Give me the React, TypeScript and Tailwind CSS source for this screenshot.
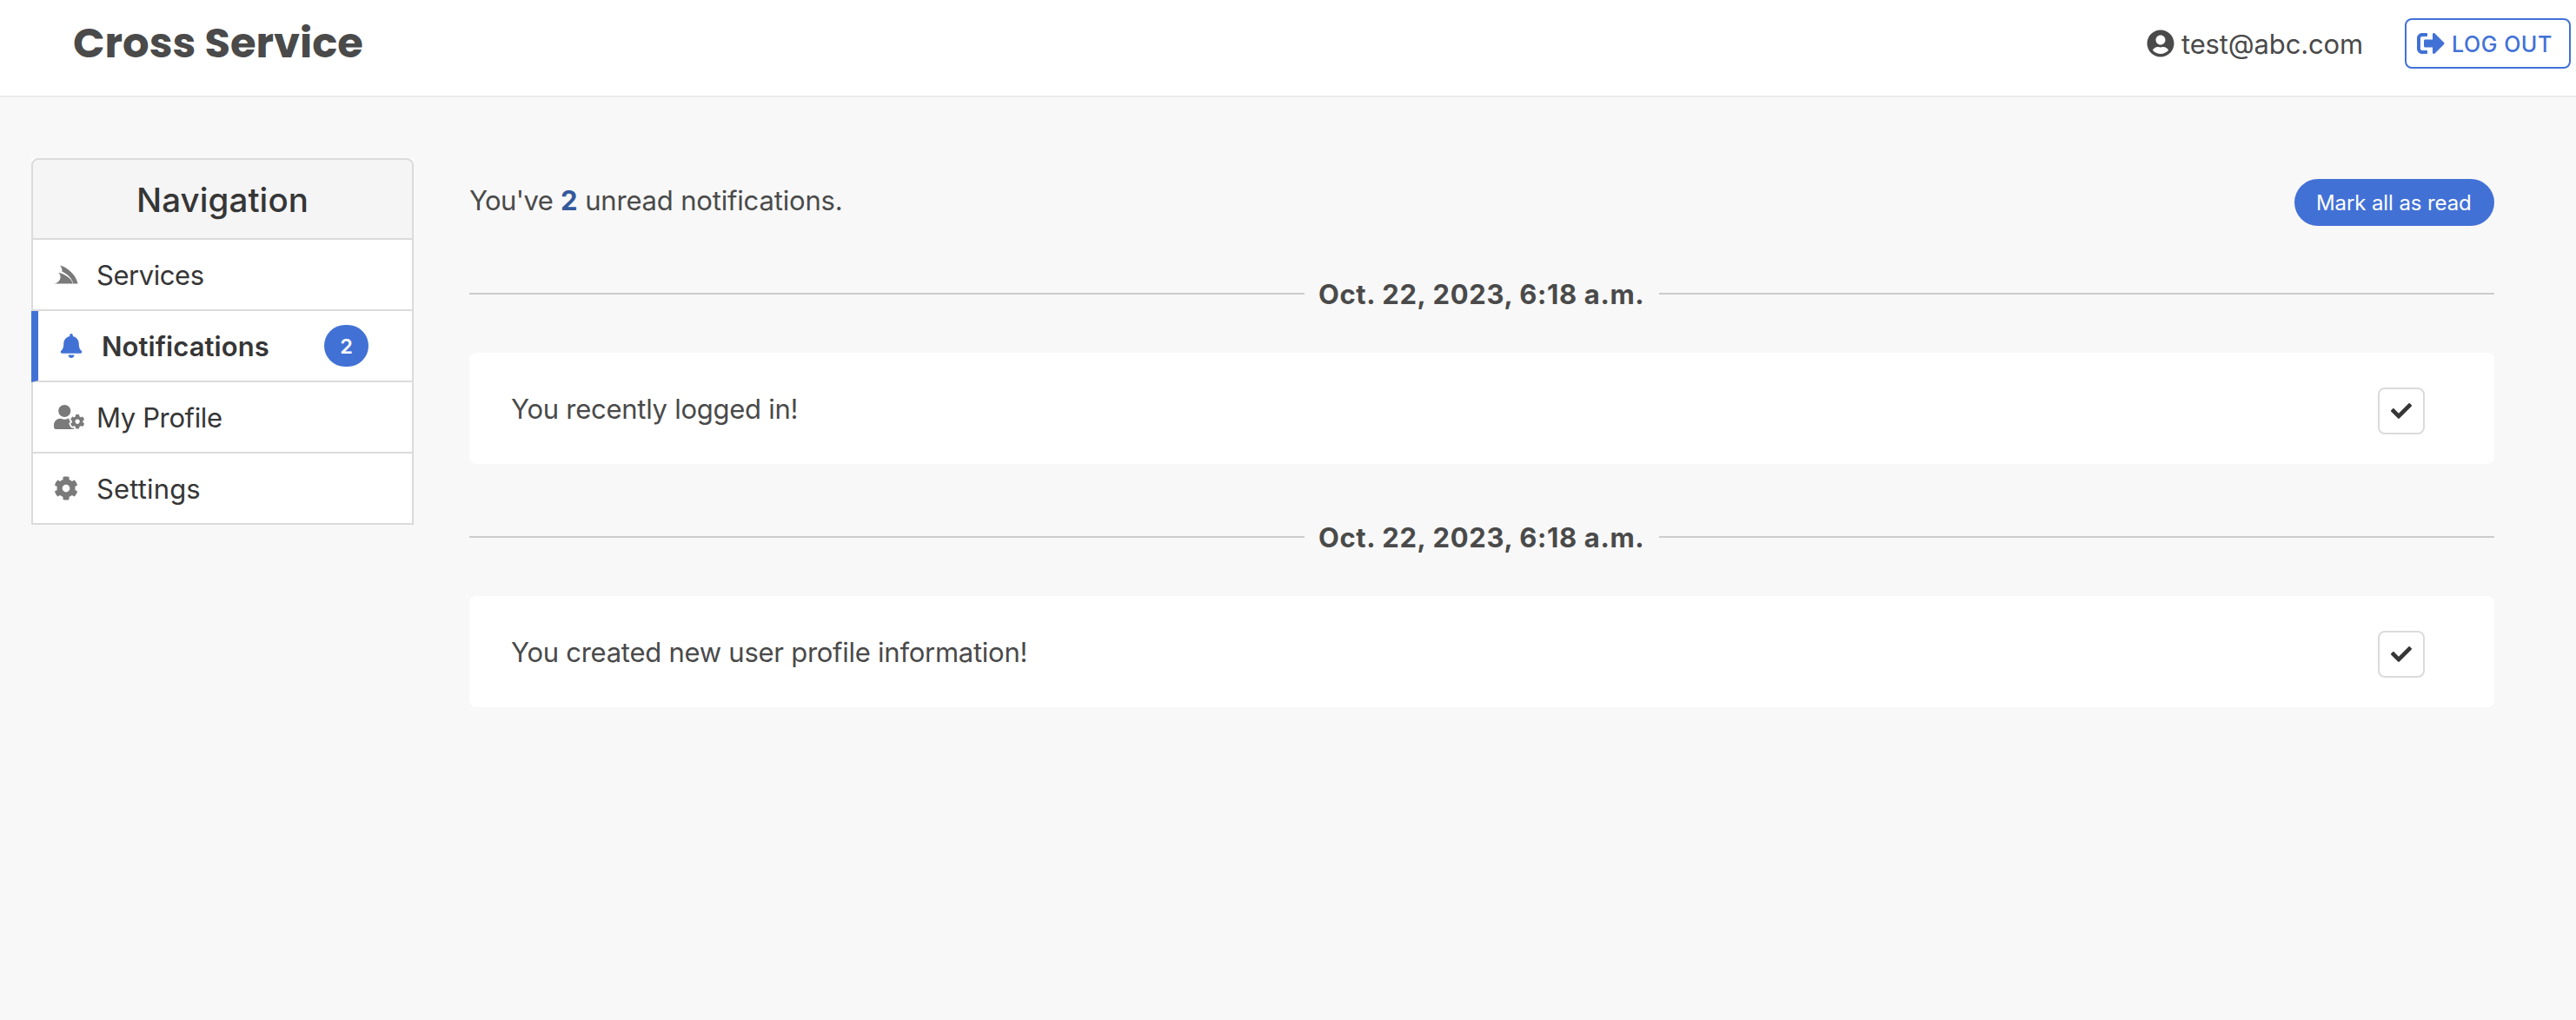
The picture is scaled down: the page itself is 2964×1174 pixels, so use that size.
import React from 'react';
import {
  FaBell,
  FaCheck,
  FaCog,
  FaServicestack,
  FaSignOutAlt,
  FaUserCircle,
  FaUserCog,
} from 'react-icons/fa';

function Header() {
  return (
    <header className="flex h-28 items-start justify-between border-b-2 border-[#ececec] bg-white pr-1.5 pl-[84px]">
      <h1 className="mt-4 font-[family-name:Poppins,Inter,sans-serif] text-5xl leading-[67px] font-bold text-[#4a4a4a]">
        Cross Service
      </h1>
      <div className="flex items-start">
        <div className="mt-8 mr-[50px] flex gap-2 text-[#4a4a4a]">
          <FaUserCircle className="mt-0.5 size-8" />
          <span className="w-[207px] text-[31px] leading-[37px] tracking-[-0.15px] whitespace-nowrap">
            test@abc.com
          </span>
        </div>
        <button className="mt-[21px] flex h-[58px] w-[191px] items-start gap-2 rounded-lg border-2 border-[#4271d6] pl-3 text-[#4271d6]">
          <FaSignOutAlt className="mt-[11px] size-8 shrink-0" />
          <span className="mt-[13px] text-[25px] leading-[30px] font-medium tracking-[0.55px] whitespace-nowrap">
            LOG OUT
          </span>
        </button>
      </div>
    </header>
  );
}

type NavItemProps = {
  icon: React.ReactNode;
  label: string;
  tracking: string;
  active?: boolean;
  badge?: number;
};

function NavItem({ icon, label, tracking, active, badge }: NavItemProps) {
  return (
    <a
      className={
        'flex h-[82px] items-start border-r-2 border-b-2 border-[#dbdbdb] bg-white pl-6 ' +
        (active ? 'border-l-8 border-l-[#4271d6]' : 'border-l-2')
      }
    >
      <span
        className={
          'mt-[26px] mr-[21px] flex w-7 ' + (active ? 'justify-center text-[#4271d6]' : 'text-[#7a7a7a]')
        }
      >
        {icon}
      </span>
      <span
        className={
          'mt-[22px] text-[31px] leading-[37px] whitespace-nowrap text-[#363636] ' +
          tracking +
          (active ? ' font-semibold' : '')
        }
      >
        {label}
      </span>
      {badge !== undefined && (
        <span className="mt-4 mr-[50px] ml-auto flex h-12 w-[51px] justify-center rounded-3xl bg-[#4271d6] pt-2.5 text-[23.5px] leading-[29px] font-semibold text-white">
          {badge}
        </span>
      )}
    </a>
  );
}

function Sidebar() {
  return (
    <nav className="w-[440px] shrink-0 bg-white">
      <p className="h-[94px] rounded-t-lg border-2 border-[#dbdbdb] bg-[#f5f5f5] pt-[23px] text-center text-[38.5px] leading-[46px] font-medium tracking-[0.08px] text-[#363636]">
        Navigation
      </p>
      <NavItem icon={<FaServicestack className="size-7 shrink-0" />} label="Services" tracking="tracking-[-0.45px]" />
      <NavItem
        icon={<FaBell className="size-7 shrink-0" />}
        label="Notifications"
        tracking="tracking-[0.07px]"
        active
        badge={2}
      />
      <NavItem icon={<FaUserCog className="h-7 w-[35px] shrink-0" />} label="My Profile" tracking="tracking-[-0.37px]" />
      <NavItem icon={<FaCog className="size-7 shrink-0" />} label="Settings" tracking="tracking-[0.15px]" />
    </nav>
  );
}

function Notification({ date, text }: { date: string; text: string }) {
  return (
    <section>
      <div className="flex">
        <div className="mt-[17px] h-0.5 flex-1 bg-[#cccccc]" />
        <h2 className="w-[408px] pl-4 text-[31px] leading-[37px] font-bold tracking-[0.62px] whitespace-nowrap text-[#4a4a4a]">
          {date}
        </h2>
        <div className="mt-[17px] h-0.5 flex-1 bg-[#cccccc]" />
      </div>
      <div className="mt-[49px] flex h-32 items-start justify-between rounded-lg bg-white pr-20 pl-12">
        <p className="mt-[46px] text-[31px] leading-[37px] tracking-[-0.26px] text-[#4a4a4a]">{text}</p>
        <button className="mt-10 flex size-[54px] items-center justify-center rounded-lg border-2 border-[#dbdbdb] text-[#363636]">
          <FaCheck className="size-6" />
        </button>
      </div>
    </section>
  );
}

export default function App() {
  return (
    <div className="min-h-screen bg-[#f8f8f8] font-[family-name:Inter,sans-serif]">
      <Header />
      <div className="flex items-start pt-[70px] pr-[94px] pl-9">
        <Sidebar />
        <main className="ml-16 flex-1 pt-6">
          <div className="flex items-start justify-between">
            <p className="mt-1.5 text-[31px] leading-[37px] text-[#4a4a4a]">
              <span className="tracking-[-0.6px]">You've</span>{' '}
              <strong className="font-bold text-[#34589b]">2</strong>{' '}
              <span className="tracking-[-0.18px]">unread notifications.</span>
            </p>
            <button className="flex h-[54px] w-[230px] rounded-full bg-[#4271d6] pt-[13px] pl-[25px] text-2xl leading-[29px] tracking-[-0.1px] whitespace-nowrap text-white">
              Mark all as read
            </button>
          </div>
          <div className="mt-[60px] flex flex-col gap-[66px]">
            <Notification date="Oct. 22, 2023, 6:18 a.m." text="You recently logged in!" />
            <Notification date="Oct. 22, 2023, 6:18 a.m." text="You created new user profile information!" />
          </div>
        </main>
      </div>
    </div>
  );
}
